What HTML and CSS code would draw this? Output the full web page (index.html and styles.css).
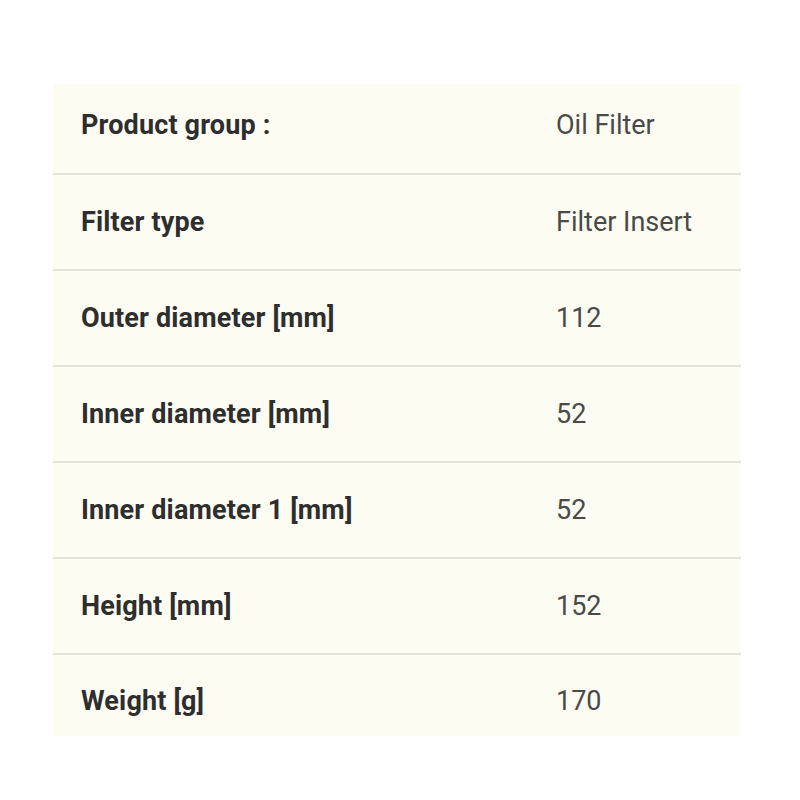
FILE: index.html
```html
<!DOCTYPE html>
<html>
<head>
<meta charset="utf-8">
<link rel="stylesheet" href="styles.css">
</head>
<body>
<div class="spec">
  <div class="row first"><div class="label">Product group :</div><div class="value">Oil Filter</div></div>
  <div class="row"><div class="label">Filter type</div><div class="value">Filter Insert</div></div>
  <div class="row"><div class="label">Outer diameter [mm]</div><div class="value">112</div></div>
  <div class="row"><div class="label">Inner diameter [mm]</div><div class="value">52</div></div>
  <div class="row"><div class="label">Inner diameter 1 [mm]</div><div class="value">52</div></div>
  <div class="row"><div class="label">Height [mm]</div><div class="value">152</div></div>
  <div class="row last"><div class="label">Weight [g]</div><div class="value">170</div></div>
</div>
</body>
</html>
```

FILE: styles.css
```css
html, body {
  margin: 0;
  padding: 0;
  background: #ffffff;
}
body {
  padding-top: 84px;
  padding-left: 53px;
  font-family: Roboto, "Liberation Sans", sans-serif;
}
.spec {
  width: 688px;
  background: #fcfcf2;
}
.row {
  display: flex;
  align-items: center;
  height: 96px;
  box-sizing: border-box;
  padding-bottom: 0;
  border-bottom: 2px solid #e3e3d9;
}
.row.first {
  height: 91px;
  padding-bottom: 8px;
}
.row.last {
  height: 81px;
  border-bottom: none;
  padding-bottom: 0;
  padding-top: 11px;
}
.label {
  width: 475px;
  padding-left: 28px;
  font-size: 27px;
  font-weight: 700;
  color: #2e2e2e;
  letter-spacing: 0.15px;
}
.value {
  font-size: 27px;
  color: #4a4a4a;
}
```
